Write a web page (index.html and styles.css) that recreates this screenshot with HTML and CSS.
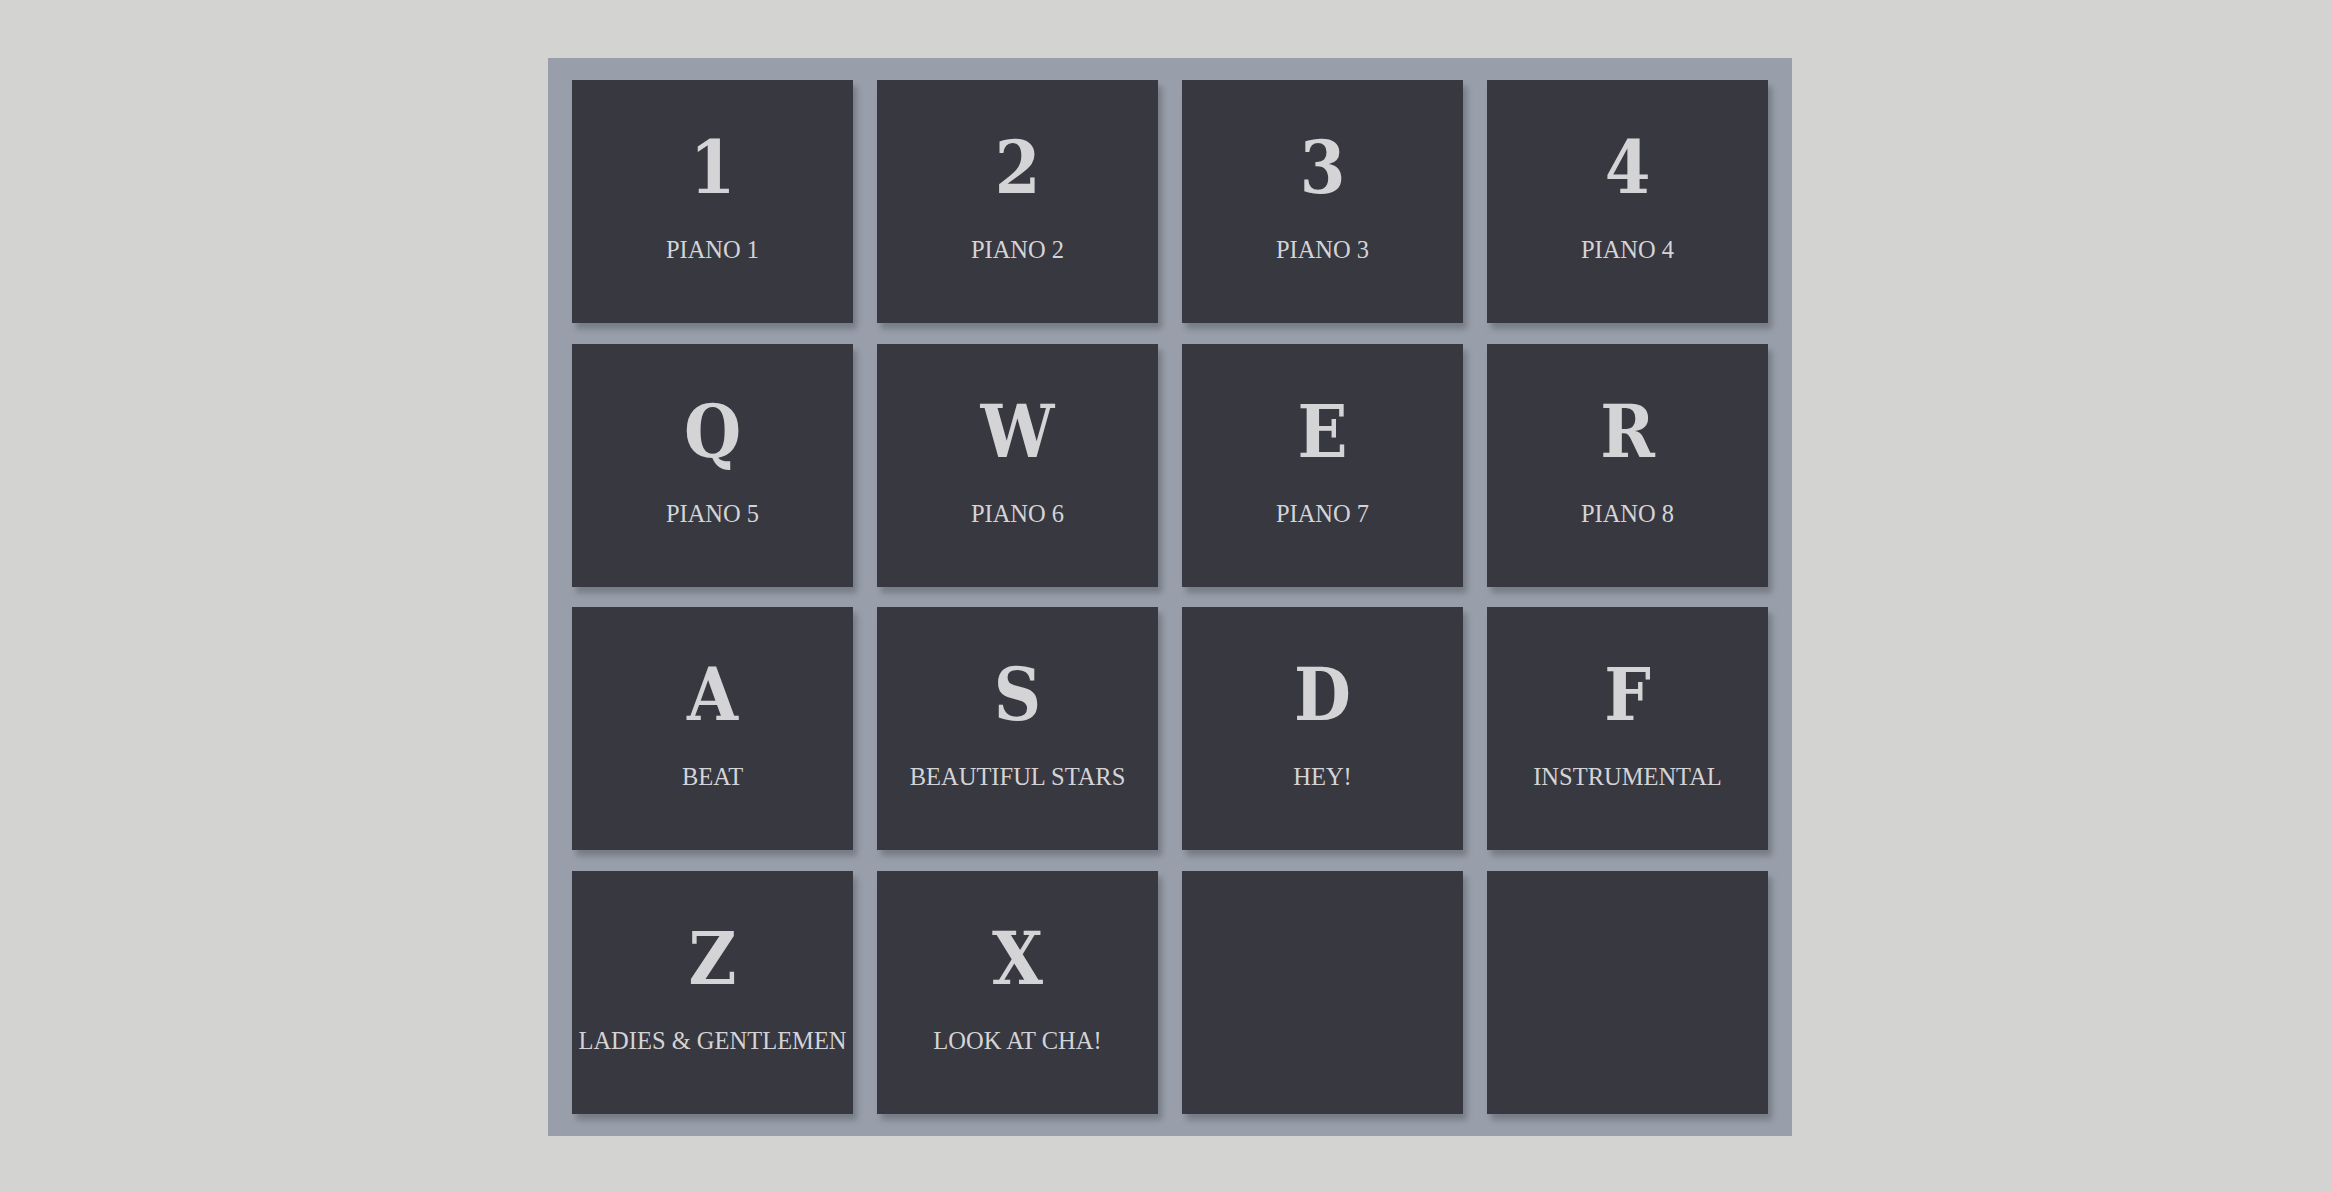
FILE: index.html
```html
<!DOCTYPE html>
<html lang="en">
<head>
<meta charset="utf-8">
<title>Drum Machine</title>
<link rel="stylesheet" href="styles.css">
</head>
<body>
<div class="board">
  <div class="pad"><div class="key">1</div><div class="label">PIANO 1</div></div>
  <div class="pad"><div class="key">2</div><div class="label">PIANO 2</div></div>
  <div class="pad"><div class="key">3</div><div class="label">PIANO 3</div></div>
  <div class="pad"><div class="key">4</div><div class="label">PIANO 4</div></div>
  <div class="pad"><div class="key">Q</div><div class="label">PIANO 5</div></div>
  <div class="pad"><div class="key">W</div><div class="label">PIANO 6</div></div>
  <div class="pad"><div class="key">E</div><div class="label">PIANO 7</div></div>
  <div class="pad"><div class="key">R</div><div class="label">PIANO 8</div></div>
  <div class="pad"><div class="key">A</div><div class="label">BEAT</div></div>
  <div class="pad"><div class="key">S</div><div class="label">BEAUTIFUL STARS</div></div>
  <div class="pad"><div class="key">D</div><div class="label">HEY!</div></div>
  <div class="pad"><div class="key">F</div><div class="label">INSTRUMENTAL</div></div>
  <div class="pad"><div class="key">Z</div><div class="label">LADIES &amp; GENTLEMEN</div></div>
  <div class="pad"><div class="key">X</div><div class="label">LOOK AT CHA!</div></div>
  <div class="pad"></div>
  <div class="pad"></div>
</div>
</body>
</html>
```
FILE: styles.css
```css
html, body {
  margin: 0;
  padding: 0;
}
body {
  background: #d3d3d1;
  height: 1192px;
  overflow: hidden;
}
.board {
  box-sizing: border-box;
  width: 1244px;
  height: 1078px;
  margin: 58px 0 0 548px;
  padding: 22px 24px;
  background: #989fab;
  display: grid;
  grid-template-columns: repeat(4, 281px);
  grid-template-rows: repeat(4, 243px);
  column-gap: 24px;
  row-gap: 20.67px;
}
.pad {
  background: #383841;
  box-shadow: 4px 6px 6px rgba(0, 0, 0, 0.22);
  display: flex;
  flex-direction: column;
  align-items: center;
  padding-top: 51px;
  box-sizing: border-box;
  color: #d4d4d6;
}
.key {
  font-family: "DejaVu Serif Condensed", "DejaVu Serif", serif;
  font-stretch: condensed;
  font-weight: bold;
  font-size: 73px;
  line-height: 72px;
  margin-bottom: 35px;
}
.label {
  font-family: "Liberation Serif", "Times New Roman", serif;
  font-size: 24.5px;
  line-height: 24.5px;
  white-space: nowrap;
}
```
